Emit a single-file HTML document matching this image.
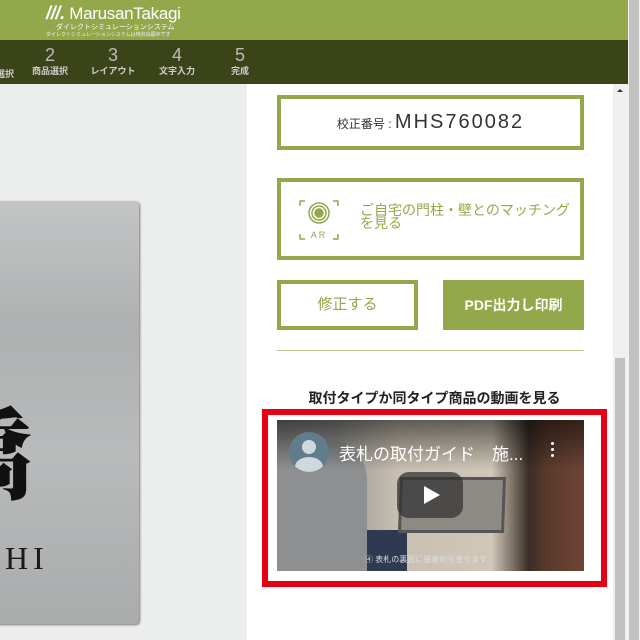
<!DOCTYPE html>
<html><head><meta charset="utf-8"><style>
*{margin:0;padding:0;box-sizing:border-box}
html{overflow:hidden}
body{width:640px;height:640px;overflow:hidden;position:relative;background:#fff;font-family:"Liberation Sans","Noto Sans CJK JP",sans-serif}
.a{position:absolute}
.ob{border:4px solid #93a84a;background:#fff}
.st{font-weight:bold}
</style></head><body>
<div class="a" style="left:0;top:0;width:628px;height:40px;background:#93a84a"></div>
<div class="a" style="left:46px;top:3px;color:#fff;font-size:17px;letter-spacing:-0.3px"><b style="font-style:italic;font-size:18px">///.</b> MarusanTakagi</div>
<div class="a" style="left:56px;top:22px;color:#fff;font-size:7px">ダイレクトシミュレーションシステム</div>
<div class="a" style="left:46px;top:31px;color:#eef;font-size:5px">ダイレクトシミュレーションシステムは特許出願中です</div>
<div class="a" style="left:0;top:40px;width:628px;height:44px;background:#3b4419"></div>
<div class="a st" style="left:-4px;top:67px;color:#ccc;font-size:9px">選択</div>
<div class="a" style="left:30px;top:45px;width:40px;text-align:center;color:#bbb;font-size:18px;line-height:20px">2<div class="st" style="font-size:9px;line-height:12px;color:#ccc">商品選択</div></div>
<div class="a" style="left:88px;top:45px;width:50px;text-align:center;color:#bbb;font-size:18px;line-height:20px">3<div class="st" style="font-size:9px;line-height:12px;color:#ccc">レイアウト</div></div>
<div class="a" style="left:152px;top:45px;width:50px;text-align:center;color:#bbb;font-size:18px;line-height:20px">4<div class="st" style="font-size:9px;line-height:12px;color:#ccc">文字入力</div></div>
<div class="a" style="left:220px;top:45px;width:40px;text-align:center;color:#bbb;font-size:18px;line-height:20px">5<div class="st" style="font-size:9px;line-height:12px;color:#ccc">完成</div></div>

<div class="a" style="left:0;top:84px;width:247px;height:556px;background:#eceded"></div>
<div class="a" style="left:-10px;top:201px;width:149px;height:423px;border-radius:4px;background:linear-gradient(180deg,#c2c4c5,#aeb0b1 30%,#b8babb 60%,#a9abac);box-shadow:1px 1px 2px #777;overflow:hidden">
<div class="a" style="left:-58px;top:192px;font-family:'Noto Serif CJK SC',serif;font-weight:900;font-size:100px;line-height:110px;color:#111">橋</div>
<div class="a" style="left:15px;top:339px;font-family:'Liberation Serif',serif;font-size:32px;letter-spacing:5px;color:#1a1a1a">HI</div>
</div>

<div class="ob a" style="left:277px;top:95px;width:307px;height:55px;text-align:center;line-height:46px;color:#333"><span style="font-size:12px">校正番号 : </span><span style="font-size:20px;letter-spacing:2px">MHS760082</span></div>
<div class="ob a" style="left:277px;top:178px;width:307px;height:82px"></div>
<svg class="a" style="left:298px;top:199px" width="42" height="42" viewBox="0 0 42 42" fill="none" stroke="#93a84a" stroke-width="1.5"><path d="M2 7V2h5M35 2h5v5M2 35v5h5M35 40h5v-5"/><circle cx="21" cy="14" r="10"/><circle cx="21" cy="14" r="7"/><circle cx="21" cy="14" r="4" fill="#93a84a"/><text x="21" y="39" font-size="9" fill="#93a84a" stroke="none" text-anchor="middle" font-family="Liberation Sans" letter-spacing="2">AR</text></svg>
<div class="a" style="left:360px;top:204px;width:210px;font-size:14px;line-height:13px;color:#93a84a">ご自宅の門柱・壁とのマッチングを見る</div>
<div class="ob a" style="left:277px;top:280px;width:141px;height:50px;text-align:center;line-height:42px;color:#93a84a;font-size:15px">修正する</div>
<div class="a" style="left:443px;top:280px;width:141px;height:50px;background:#93a84a;text-align:center;line-height:50px;color:#fff;font-size:14px;font-weight:bold">PDF出力し印刷</div>
<div class="a" style="left:277px;top:350px;width:307px;height:1px;background:#b5c48a"></div>
<div class="a" style="left:262px;top:388px;width:345px;text-align:center;font-size:14px;font-weight:bold;color:#222">取付タイプか同タイプ商品の動画を見る</div>
<div class="a" style="left:262px;top:409px;width:345px;height:178px;border:6px solid #e60012;background:#fff"></div>
<div class="a" style="left:277px;top:420px;width:307px;height:151px;overflow:hidden;background:linear-gradient(90deg,#8a8885 0,#9a9794 20%,#c9c0b2 40%,#d0c7b8 70%,#3a2e26 82%,#5a3a2c 88%,#6e4535 100%)">
<div class="a" style="left:0;top:20px;width:90px;height:131px;background:#8e8f90;border-radius:0 40px 0 0"></div>
<div class="a" style="left:90px;top:110px;width:40px;height:41px;background:#2d3a52"></div>
<div class="a" style="left:122px;top:57px;width:106px;height:56px;background:#8d8a84;border:3px solid #555;transform:skewX(-2deg)"></div>
<div class="a" style="left:0;top:0;width:307px;height:50px;background:linear-gradient(#0008,#0000)"></div>
<div class="a" style="left:12px;top:12px;width:40px;height:40px;border-radius:50%;background:#607d8b;overflow:hidden"><div class="a" style="left:13px;top:8px;width:14px;height:14px;border-radius:50%;background:#cfd8dc"></div><div class="a" style="left:6px;top:25px;width:28px;height:20px;border-radius:50%;background:#cfd8dc"></div></div>
<div class="a" style="left:62px;top:20px;color:#fff;font-size:17px">表札の取付ガイド　施...</div>
<div class="a" style="left:274px;top:22px;width:3px;height:3px;background:#fff;border-radius:50%;box-shadow:0 6px #fff,0 12px #fff"></div>
<div class="a" style="left:120px;top:52px;width:66px;height:46px;border-radius:12px;background:#333b"></div>
<div class="a" style="left:147px;top:66px;width:0;height:0;border-left:16px solid #fff;border-top:9px solid transparent;border-bottom:9px solid transparent"></div>
<div class="a" style="left:88px;top:134px;color:#ddd;font-size:8px">④ 表札の裏面に接着剤を塗ります</div>
</div>

<div class="a" style="left:613px;top:84px;width:15px;height:556px;background:#f0f0f0"></div>
<div class="a" style="left:617px;top:89px;border-left:3px solid transparent;border-right:3px solid transparent;border-bottom:3px solid #333"></div>
<div class="a" style="left:615px;top:358px;width:10px;height:282px;background:#c1c1c1"></div>
<div class="a" style="left:628px;top:0;width:12px;height:640px;background:#f0f0f0"></div>
<div class="a" style="left:629px;top:0;width:10px;height:640px;background:#c1c1c1"></div>
</body></html>
